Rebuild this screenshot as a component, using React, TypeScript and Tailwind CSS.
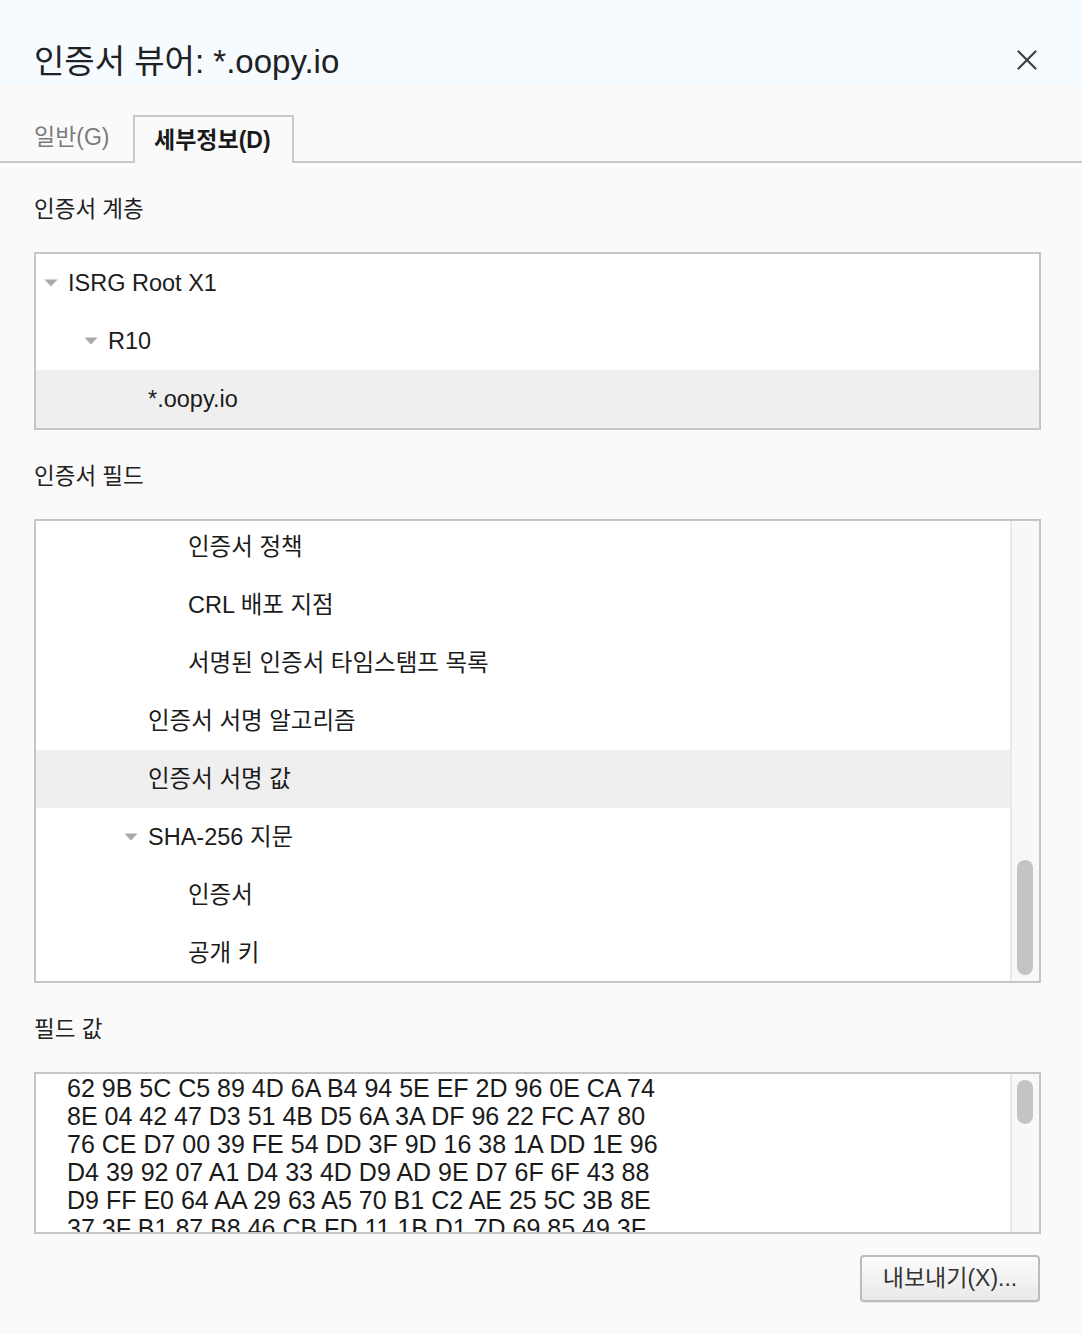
const FONT = "font-['Liberation_Sans','Noto_Sans_CJK_KR',sans-serif]";

type Row = { text: string; level: number; open?: boolean; selected?: boolean };

const chain: Row[] = [
  { text: "ISRG Root X1", level: 0, open: true },
  { text: "R10", level: 1, open: true },
  { text: "*.oopy.io", level: 2, selected: true },
];

const fields: Row[] = [
  { text: "인증서 정책", level: 3 },
  { text: "CRL 배포 지점", level: 3 },
  { text: "서명된 인증서 타임스탬프 목록", level: 3 },
  { text: "인증서 서명 알고리즘", level: 2 },
  { text: "인증서 서명 값", level: 2, selected: true },
  { text: "SHA-256 지문", level: 2, open: true },
  { text: "인증서", level: 3 },
  { text: "공개 키", level: 3 },
];

const hex = [
  "62 9B 5C C5 89 4D 6A B4 94 5E EF 2D 96 0E CA 74",
  "8E 04 42 47 D3 51 4B D5 6A 3A DF 96 22 FC A7 80",
  "76 CE D7 00 39 FE 54 DD 3F 9D 16 38 1A DD 1E 96",
  "D4 39 92 07 A1 D4 33 4D D9 AD 9E D7 6F 6F 43 88",
  "D9 FF E0 64 AA 29 63 A5 70 B1 C2 AE 25 5C 3B 8E",
  "37 3F B1 87 B8 46 CB FD 11 1B D1 7D 69 85 49 3F",
  "A0 5E 12 C4 7B 88 0D 93 E1 4F 26 BA 51 0C 7E 2D",
];

function Caret() {
  return (
    <svg width="14" height="8" viewBox="0 0 14 8" className="shrink-0">
      <path d="M0.5 0.5 L13.5 0.5 L7 7.5 Z" fill="#a9a9a9" />
    </svg>
  );
}

function TreeRow({ row }: { row: Row }) {
  return (
    <div
      className={`flex h-[58px] shrink-0 items-center text-[23.5px] leading-[58px] text-[#1c1c1c] ${
        row.selected ? "bg-[#efefef]" : ""
      }`}
      style={{ paddingLeft: 8 + row.level * 40 }}
    >
      <div className="flex w-[24px] shrink-0 items-center">{row.open ? <Caret /> : null}</div>
      <span>{row.text}</span>
    </div>
  );
}

function Label({ text }: { text: string }) {
  return (
    <div className="mt-[32px] mb-[27px] flex h-[30px] items-center text-[22.5px] leading-[30px] text-[#222]">
      {text}
    </div>
  );
}

function Scrollbar({ top, height }: { top: number; height: number }) {
  return (
    <div className="relative w-[29px] shrink-0 border-l-[2px] border-[#e8e8e8] bg-[#f8f8f8]">
      <div
        className="absolute left-[5px] w-[16px] rounded-full bg-[#c4c4c4]"
        style={{ top, height }}
      />
    </div>
  );
}

export default function App() {
  return (
    <div className={`min-h-[1334px] w-[1082px] bg-[#fafafa] ${FONT}`}>
      {/* header */}
      <div className="flex h-[85px] items-center justify-between bg-[#f5fbfe] pt-[38px] pl-[34px] pr-[45px]">
        <h1 className="text-[33px] leading-[40px] font-normal text-[#202124]">
          인증서 뷰어: *.oopy.io
        </h1>
        <svg width="20" height="20" viewBox="0 0 20 20" className="mt-[-4px]">
          <path d="M1.5 1.5 L18.5 18.5 M18.5 1.5 L1.5 18.5" stroke="#3c4043" strokeWidth="2.2" strokeLinecap="round" />
        </svg>
      </div>

      {/* tabs */}
      <div className="flex h-[78px] items-end border-b-[2px] border-[#c8c8c8]">
        <div className="flex h-[48px] w-[133px] items-center pl-[34px] text-[23px] text-[#7a7a7a]">
          일반(G)
        </div>
        <div className="mb-[-2px] flex h-[48px] w-[161px] items-center border-[2px] border-b-0 border-[#c8c8c8] bg-[#fafafa] pl-[19px] text-[23px] font-bold text-[#1a1a1a]">
          세부정보(D)
        </div>
      </div>

      <div className="pl-[34px] pr-[41px]">
        <Label text="인증서 계층" />
        <div className="flex flex-col border-[2px] border-[#c6c6c6] bg-white">
          {chain.map((r) => (
            <TreeRow key={r.text} row={r} />
          ))}
        </div>

        <Label text="인증서 필드" />
        <div className="flex h-[464px] border-[2px] border-[#c6c6c6] bg-white">
          <div className="flex flex-1 flex-col overflow-hidden">
            <div className="mt-[-3px] flex flex-col">
              {fields.map((r) => (
                <TreeRow key={r.text} row={r} />
              ))}
            </div>
          </div>
          <Scrollbar top={339} height={115} />
        </div>

        <Label text="필드 값" />
        <div className="flex h-[162px] border-[2px] border-[#c6c6c6] bg-white">
          <div className="flex-1 overflow-hidden pl-[31px]">
            {hex.map((l, i) => (
              <div key={i} className="h-[28px] text-[25px] leading-[28px] whitespace-nowrap text-[#1a1a1a]">
                {l}
              </div>
            ))}
          </div>
          <Scrollbar top={6} height={44} />
        </div>

        <div className="mt-[21px] flex justify-end pr-[1px]">
          <button className="h-[47px] w-[180px] rounded-[4px] border-[2px] border-[#bcbcbc] bg-gradient-to-b from-[#fbfbfb] to-[#e9e9e9] text-[23px] text-[#333] shadow-[0_1px_1px_rgba(0,0,0,0.08)]">
            내보내기(X)...
          </button>
        </div>
      </div>
    </div>
  );
}
